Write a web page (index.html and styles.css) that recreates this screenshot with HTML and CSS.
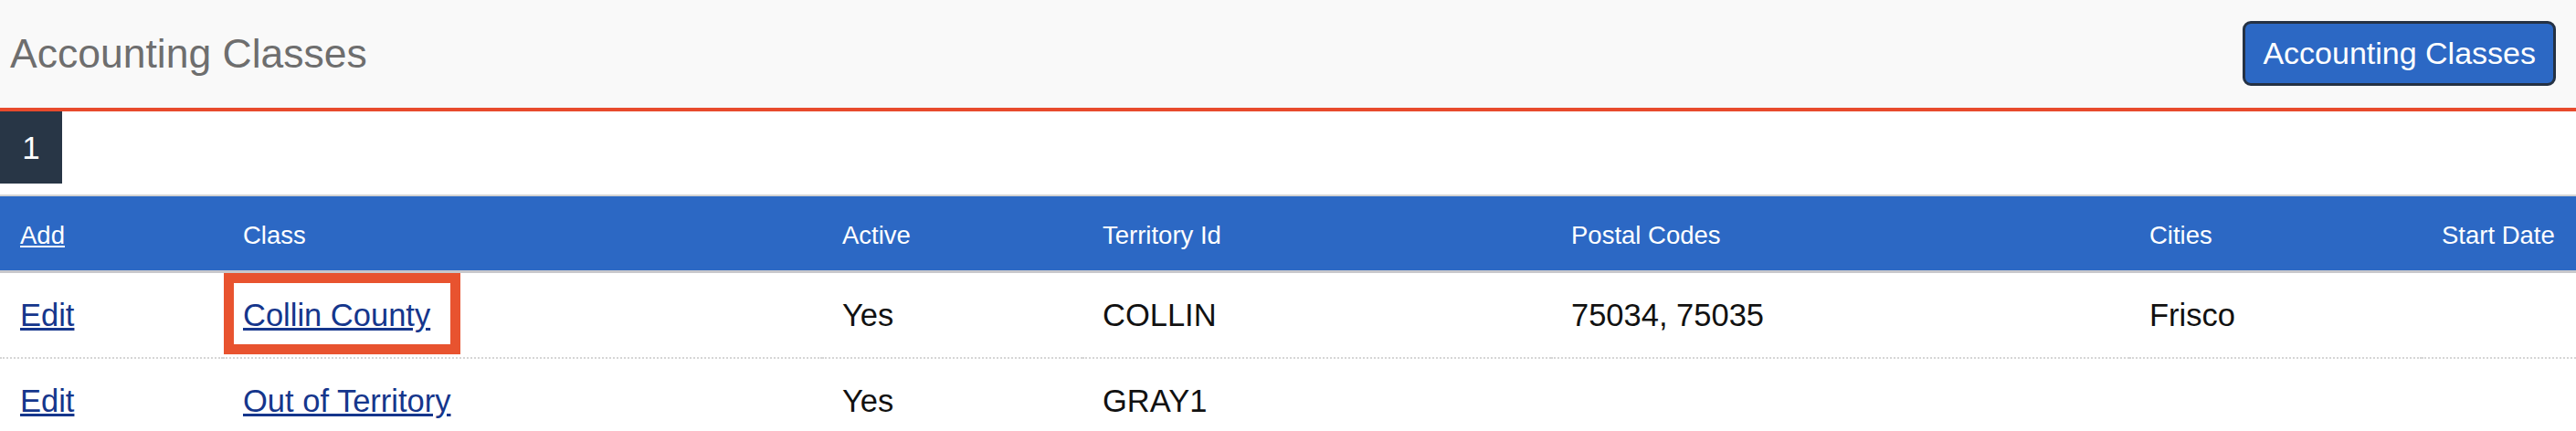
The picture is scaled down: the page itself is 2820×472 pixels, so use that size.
FILE: index.html
```html
<!DOCTYPE html>
<html lang="en">
<head>
<meta charset="utf-8">
<title>Accounting Classes</title>
<link rel="stylesheet" href="styles.css">
</head>
<body>
<header class="topbar">
  <h1 class="title">Accounting Classes</h1>
  <button class="btn" type="button">Accounting Classes</button>
</header>
<nav class="pager">
  <span class="page">1</span>
</nav>
<table class="grid">
  <colgroup>
    <col class="c-act">
    <col class="c-class">
    <col class="c-active">
    <col class="c-terr">
    <col class="c-postal">
    <col class="c-cities">
    <col class="c-start">
  </colgroup>
  <thead>
    <tr>
      <th><a href="#" class="head-link">Add</a></th>
      <th>Class</th>
      <th>Active</th>
      <th>Territory Id</th>
      <th>Postal Codes</th>
      <th>Cities</th>
      <th>Start Date</th>
    </tr>
  </thead>
  <tbody>
    <tr>
      <td><a href="#" class="link">Edit</a></td>
      <td><a href="#" class="link hl">Collin County</a></td>
      <td>Yes</td>
      <td>COLLIN</td>
      <td>75034, 75035</td>
      <td>Frisco</td>
      <td></td>
    </tr>
    <tr>
      <td><a href="#" class="link">Edit</a></td>
      <td><a href="#" class="link">Out of Territory</a></td>
      <td>Yes</td>
      <td>GRAY1</td>
      <td></td>
      <td></td>
      <td></td>
    </tr>
  </tbody>
</table>
</body>
</html>
```
FILE: styles.css
```css
* { box-sizing: border-box; }

html, body {
  margin: 0;
  padding: 0;
  background: #ffffff;
  font-family: "Liberation Sans", Arial, sans-serif;
}

.topbar {
  display: flex;
  align-items: center;
  justify-content: space-between;
  height: 122px;
  padding: 0 22px 0 11px;
  background: #f9f9f9;
  border-bottom: 4px solid #e84a2c;
}

.title {
  margin: 0;
  font-size: 44.5px;
  font-weight: normal;
  color: #6e6e6e;
  line-height: 1;
}

.btn {
  font-family: "Liberation Sans", Arial, sans-serif;
  font-size: 34px;
  line-height: 39px;
  color: #ffffff;
  background: #2c68c4;
  border: 3px solid #253244;
  border-radius: 9px;
  padding: 13px 19px;
  margin-top: -1px;
}

.pager {
  display: flex;
  margin-bottom: 12px;
}

.page {
  display: flex;
  align-items: center;
  justify-content: center;
  width: 68px;
  height: 79px;
  background: #283646;
  color: #ffffff;
  font-size: 35px;
}

.grid {
  width: 100%;
  table-layout: fixed;
  border-collapse: collapse;
}

.c-act { width: 244px; }
.c-class { width: 656px; }
.c-active { width: 285px; }
.c-terr { width: 513px; }
.c-postal { width: 633px; }
.c-cities { width: 320px; }
.c-start { width: 169px; }

.grid thead tr {
  background: #2c68c4;
  border-top: 2px solid #d3d3d3;
  border-bottom: 3px solid #c8c8cc;
}

.grid th {
  height: 81px;
  padding: 27px 22px 23px;
  line-height: 31px;
  text-align: left;
  font-weight: normal;
  font-size: 27.5px;
  color: #ffffff;
  white-space: nowrap;
}

.head-link {
  color: #ffffff;
  text-decoration: underline;
}

.grid td {
  padding: 26px 22px;
  line-height: 40px;
  height: 94px;
  font-size: 34.5px;
  color: #111111;
  border-bottom: 2px dotted #d6d6d6;
  white-space: nowrap;
}

.link {
  color: #15368c;
  text-decoration: underline;
}

.hl {
  position: relative;
}

.hl::after {
  content: "";
  position: absolute;
  left: -21px;
  right: -33px;
  top: -27px;
  bottom: -24px;
  border: 11px solid #e8532f;
}
```
